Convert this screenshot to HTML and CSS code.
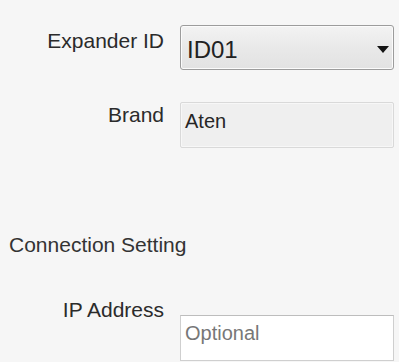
FILE: index.html
```html
<!DOCTYPE html>
<html>
<head>
<meta charset="utf-8">
<link rel="stylesheet" href="styles.css">
</head>
<body>
<div class="page">
  <div class="row row-expander">
    <div class="label">Expander ID</div>
    <div class="combo">
      <span class="combo-value">ID01</span>
      <svg class="combo-arrow" width="12" height="7" viewBox="0 0 12 7"><path d="M0 0 H12 L6 7 Z" fill="#141414"/></svg>
    </div>
  </div>
  <div class="row row-brand">
    <div class="label label-brand">Brand</div>
    <div class="field field-readonly"><span class="field-text">Aten</span></div>
  </div>
  <div class="section-title">Connection Setting</div>
  <div class="row row-ip">
    <div class="label">IP Address</div>
    <div class="field field-input"><span class="field-text placeholder">Optional</span></div>
  </div>
</div>
</body>
</html>
```
FILE: styles.css
```css
html, body {
  margin: 0;
  padding: 0;
  background: #f6f6f6;
}
body {
  font-family: "Liberation Sans", Arial, sans-serif;
  color: #2a2a2a;
  width: 399px;
  height: 362px;
  overflow: hidden;
}
.page {
  display: flex;
  flex-direction: column;
  padding-top: 25px;
}
.row {
  display: grid;
  grid-template-columns: 164px 214px;
  column-gap: 16px;
  align-items: start;
}
.label {
  font-size: 21px;
  line-height: 24px;
  text-align: right;
  color: #2b2b2b;
  margin-top: 4px;
}
.combo {
  height: 45px;
  box-sizing: border-box;
  border: 1px solid #9c9c9c;
  border-radius: 3px;
  background: linear-gradient(#f3f3f3, #e9e9e9 50%, #e2e2e2);
  box-shadow: inset 0 0 0 1px #fbfbfb;
  display: flex;
  align-items: center;
  justify-content: space-between;
  padding: 0 4px 0 6px;
}
.combo-value {
  font-size: 24px;
  line-height: 28px;
  color: #222222;
  margin-top: 4px;
}
.combo-arrow {
  margin-top: 4px;
  display: block;
}
.row-brand {
  margin-top: 32px;
}
.label-brand {
  margin-top: 1px;
}
.field {
  height: 46px;
  box-sizing: border-box;
  padding: 6px 4px 0 4px;
}
.field-readonly {
  border: 1px solid #d9d9d9;
  background: #efefef;
  box-shadow: inset 0 0 0 1px #f7f7f7;
  border-radius: 2px;
}
.field-text {
  font-size: 20px;
  line-height: 24px;
  color: #262626;
}
.section-title {
  font-size: 21px;
  line-height: 24px;
  color: #333333;
  padding-left: 9px;
  margin-top: 85px;
}
.row-ip {
  margin-top: 37px;
}
.field-input {
  margin-top: 21px;
  border: 1px solid #cfcfcf;
  border-top-color: #bdbdbd;
  background: #ffffff;
  padding-top: 5px;
}
.placeholder {
  color: #777777;
}
```
